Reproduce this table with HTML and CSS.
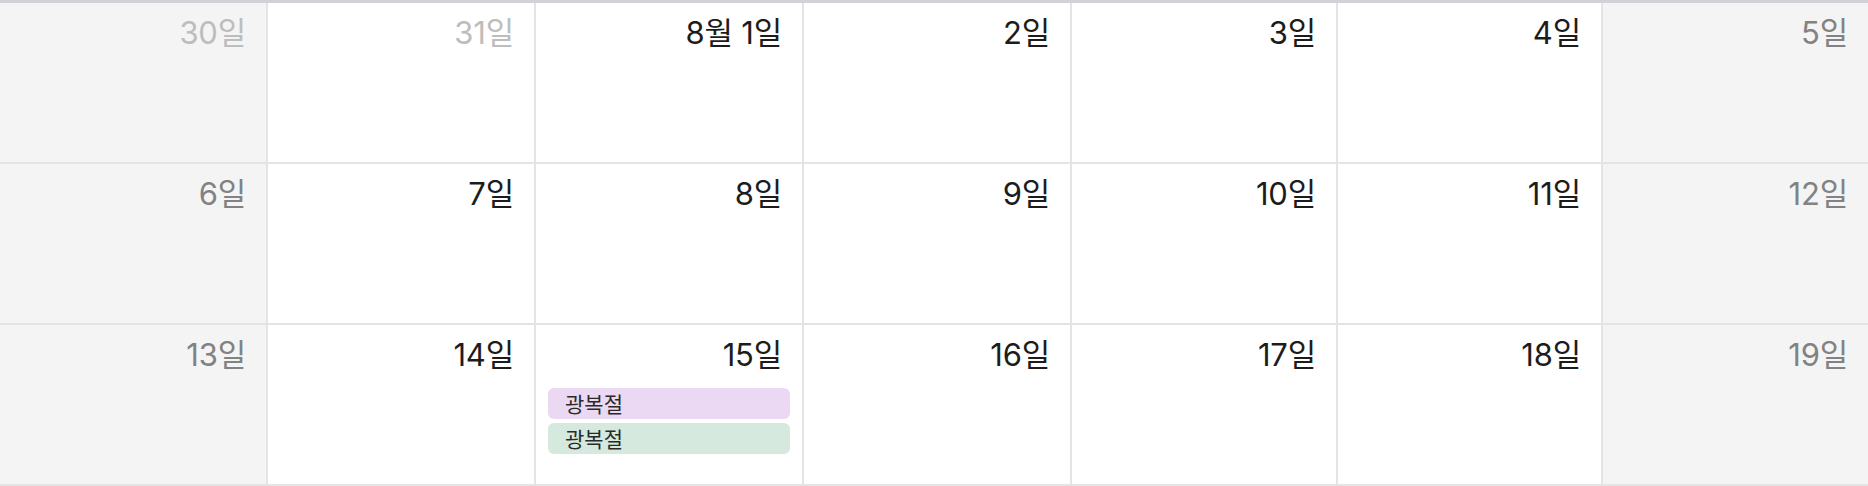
FILE: index.html
```html
<!DOCTYPE html>
<html lang="ko">
<head>
<meta charset="utf-8">
<link rel="stylesheet" href="styles.css">
</head>
<body>
<div class="calendar">
  <div class="cell weekend"><div class="date other">30일</div></div>
  <div class="cell"><div class="date other">31일</div></div>
  <div class="cell"><div class="date">8월 1일</div></div>
  <div class="cell"><div class="date">2일</div></div>
  <div class="cell"><div class="date">3일</div></div>
  <div class="cell"><div class="date">4일</div></div>
  <div class="cell weekend last"><div class="date">5일</div></div>

  <div class="cell weekend"><div class="date">6일</div></div>
  <div class="cell"><div class="date">7일</div></div>
  <div class="cell"><div class="date">8일</div></div>
  <div class="cell"><div class="date">9일</div></div>
  <div class="cell"><div class="date">10일</div></div>
  <div class="cell"><div class="date">11일</div></div>
  <div class="cell weekend last"><div class="date">12일</div></div>

  <div class="cell weekend"><div class="date">13일</div></div>
  <div class="cell"><div class="date">14일</div></div>
  <div class="cell">
    <div class="date">15일</div>
    <div class="events">
      <div class="event purple">광복절</div>
      <div class="event green">광복절</div>
    </div>
  </div>
  <div class="cell"><div class="date">16일</div></div>
  <div class="cell"><div class="date">17일</div></div>
  <div class="cell"><div class="date">18일</div></div>
  <div class="cell weekend last"><div class="date">19일</div></div>
</div>
</body>
</html>
```

FILE: styles.css
```css
html, body {
  margin: 0;
  padding: 0;
  background: #ffffff;
}

body {
  font-family: Inter, "Noto Sans CJK KR", sans-serif;
  color: #222222;
}

.calendar {
  display: grid;
  grid-template-columns: 268px 268px 268px 268px 266px 265px 1fr;
  grid-auto-rows: 161px;
  border-top: 3px solid #d2d2d6;
  width: 1868px;
  box-sizing: border-box;
}

.cell {
  display: flex;
  flex-direction: column;
  border-right: 2px solid #e4e4e4;
  border-bottom: 2px solid #e4e4e4;
  background: #ffffff;
  min-width: 0;
}

.cell.last {
  border-right: none;
}

.cell.weekend {
  background: #f4f4f4;
}

.date {
  text-align: right;
  font-size: 31px;
  line-height: 34px;
  padding: 13px 20px 0 0;
  color: #1c1c1c;
  letter-spacing: -0.2px;
}

.cell.weekend .date {
  color: #828282;
}

.date.other,
.cell.weekend .date.other {
  color: #bdbdbd;
}

.events {
  display: flex;
  flex-direction: column;
  gap: 4px;
  margin: 16px 12px 0 12px;
}

.event {
  height: 31px;
  line-height: 31px;
  border-radius: 6px;
  padding-left: 17px;
  font-size: 21px;
  color: #2a2a2a;
  font-family: "Noto Sans CJK KR", sans-serif;
}

.event.purple {
  background: #ebd9f3;
}

.event.green {
  background: #d5e9de;
}
```
